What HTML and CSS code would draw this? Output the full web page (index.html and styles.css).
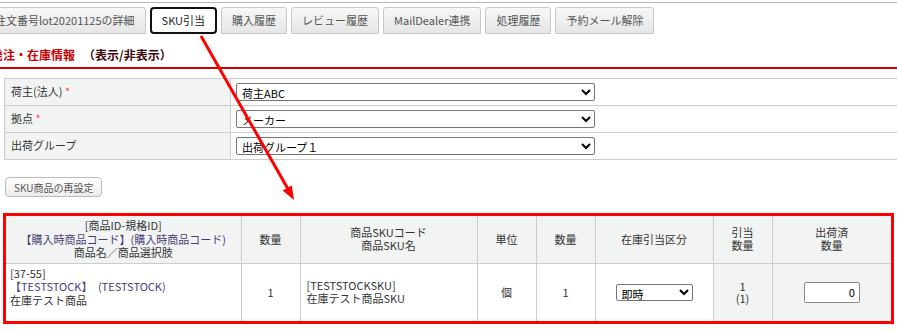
FILE: index.html
```html
<!DOCTYPE html>
<html lang="ja">
<head>
    <meta charset="UTF-8">
    <title>SKU引当</title>
    <link rel="stylesheet" href="styles.css">
</head>
<body>
    <div class="tabs">
        <div class="tab first">注文番号lot20201125の詳細</div>
        <div class="tab active">SKU引当</div>
        <div class="tab">購入履歴</div>
        <div class="tab">レビュー履歴</div>
        <div class="tab">MailDealer連携</div>
        <div class="tab">処理履歴</div>
        <div class="tab">予約メール解除</div>
    </div>

    <h2 class="section-title">発注・在庫情報<span class="toggle">（表示/非表示）</span></h2>

    <table class="form-table">
        <tr>
            <th>荷主(法人) <span class="req">*</span></th>
            <td><select class="wide"><option>荷主ABC</option></select></td>
        </tr>
        <tr>
            <th>拠点 <span class="req">*</span></th>
            <td><select class="wide"><option>メーカー</option></select></td>
        </tr>
        <tr>
            <th>出荷グループ</th>
            <td><select class="wide"><option>出荷グループ１</option></select></td>
        </tr>
    </table>

    <button class="btn-reset">SKU商品の再設定</button>

    <div class="highlight">
        <table class="sku-table">
            <colgroup>
                <col style="width:235px">
                <col style="width:59px">
                <col style="width:177px">
                <col style="width:59px">
                <col style="width:59px">
                <col style="width:118px">
                <col style="width:59px">
                <col style="width:119px">
            </colgroup>
            <tr class="head">
                <th>[商品ID-規格ID]<br><span class="code">【購入時商品コード】(購入時商品コード)</span><br>商品名／商品選択肢</th>
                <th>数量</th>
                <th>商品SKUコード<br>商品SKU名</th>
                <th>単位</th>
                <th>数量</th>
                <th>在庫引当区分</th>
                <th>引当<br>数量</th>
                <th>出荷済<br>数量</th>
            </tr>
            <tr>
                <td class="item">[37-55]<br><span class="code">【TESTSTOCK】　(TESTSTOCK)</span><br>在庫テスト商品</td>
                <td class="center">1</td>
                <td class="sku">[TESTSTOCKSKU]<br>在庫テスト商品SKU</td>
                <td class="center">個</td>
                <td class="center">1</td>
                <td class="center"><select class="small"><option>即時</option></select></td>
                <td class="center gray alloc">1<br>(1)</td>
                <td class="center gray"><input class="qty" type="text" value="0"></td>
            </tr>
        </table>
    </div>

    <!-- 注釈の矢印 -->
    <svg class="arrow" width="897" height="332" viewBox="0 0 897 332">
        <line x1="201" y1="36" x2="288" y2="189" stroke="#f00" stroke-width="3"/>
        <polygon points="294,200 282.6,190.6 291.8,185.4" fill="#f00"/>
    </svg>
</body>
</html>
```

FILE: styles.css
```css
* {
    box-sizing: border-box;
}

html, body {
    overflow: hidden;
}

body {
    margin: 0;
    font-family: "Noto Sans CJK JP", "Noto Sans", sans-serif;
    font-size: 11px;
    color: #333;
    position: relative;
    height: 332px;
}

.tabs {
    display: flex;
    gap: 4px;
    margin-top: 2px;
    padding-top: 4px;
    border-top: 1px solid #b5b5b5;
    height: 33px;
}

.tab {
    height: 27px;
    line-height: 25px;
    padding: 0 10px;
    border: 1px solid #c8c8c8;
    border-radius: 3px 3px 0 0;
    background: linear-gradient(#f7f7f7, #e6e6e6);
    color: #555;
    white-space: nowrap;
}

.tab.first {
    margin-left: -16px;
}

.tab.active {
    background: #fff;
    border: 2px solid #111;
    border-radius: 4px;
    line-height: 23px;
    color: #222;
}

.section-title {
    margin: 0 0 0 -9px;
    padding: 11px 0 4px;
    line-height: 17px;
    font-size: 12px;
    font-weight: bold;
    color: #cc0000;
    border-bottom: 2px solid #cc0000;
}

.toggle {
    color: #3a0a0a;
    margin-left: 8px;
}

.form-table {
    border-collapse: collapse;
    margin: 9px 0 0 4px;
    width: 920px;
}

.form-table th,
.form-table td {
    border: 1px solid #cdcdcd;
    height: 27px;
    vertical-align: top;
}

.form-table th {
    width: 226px;
    background: #f2f4f3;
    font-weight: normal;
    text-align: left;
    padding: 4px 6px 0;
    line-height: 16px;
}

.form-table td {
    padding: 4px 5px 0;
}

.req {
    color: #f44;
}

select {
    font-family: "Noto Sans CJK JP", sans-serif;
    font-size: 11px;
    color: #000;
    border: 1px solid #767676;
    border-radius: 2px;
    background: #fff;
    padding: 0 0 0 1px;
}

select.wide {
    width: 359px;
    height: 18px;
}

select.small {
    width: 77px;
    height: 17px;
}

.btn-reset {
    display: block;
    margin: 17px 0 0 5px;
    height: 20px;
    padding: 0 8px;
    font-family: "Noto Sans CJK JP", sans-serif;
    font-size: 10px;
    color: #555;
    border: 1px solid #bcbcbc;
    border-radius: 4px;
    background: linear-gradient(#fff, #ececec);
}

.highlight {
    margin: 16px 0 0 3px;
    width: 891px;
    border: 3px solid #ff0000;
}

.sku-table {
    width: 885px;
    border-collapse: collapse;
    table-layout: fixed;
    line-height: 13px;
}

.sku-table th,
.sku-table td {
    padding: 0;
}

.sku-table th + th,
.sku-table td + td {
    border-left: 1px solid #cdcdcd;
}

.sku-table .head th {
    height: 47px;
    background: #f2f4f3;
    font-weight: normal;
    text-align: center;
    border-bottom: 1px solid #cdcdcd;
    line-height: 13.5px;
}

.sku-table td {
    height: 58px;
}

.code {
    color: #4a3d75;
}

.item {
    vertical-align: top;
    padding: 3px 4px 0 !important;
    line-height: 13.5px;
}

.sku {
    padding-left: 6px !important;
}

.center {
    text-align: center;
}

.gray {
    background: #f2f4f3;
}

.alloc {
    line-height: 12.5px;
}

.qty {
    width: 56px;
    height: 21px;
    text-align: right;
    padding: 0 4px;
    font-family: "Noto Sans CJK JP", sans-serif;
    font-size: 11px;
    color: #000;
    border: 1px solid #8a8a8a;
    border-radius: 2px;
}

.arrow {
    position: absolute;
    top: 0;
    left: 0;
    pointer-events: none;
}
```
